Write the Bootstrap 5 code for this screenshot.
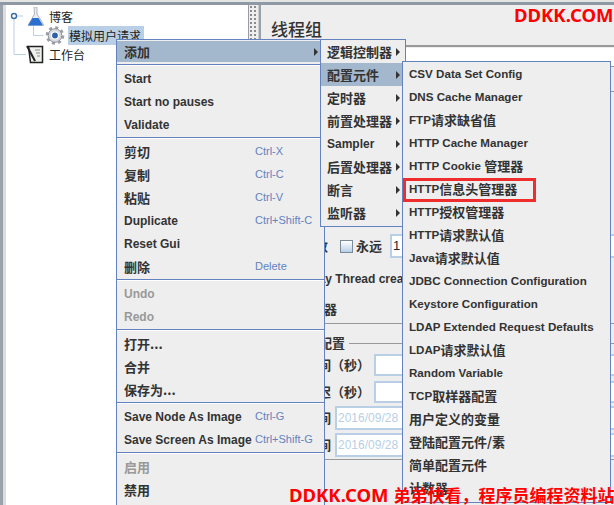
<!DOCTYPE html>
<html lang="zh">
<head>
    <meta charset="UTF-8">
    <title>JMeter menu</title>
    <link href="https://cdn.jsdelivr.net/npm/bootstrap@5.3.0/dist/css/bootstrap.min.css" rel="stylesheet">
    <style>
        html, body { height: 100%; overflow: hidden; }
        body {
            position: relative;
            background: #eeeeee;
            color: #333;
            font-family: "Liberation Sans", "Noto Sans CJK SC", sans-serif;
            font-size: 12px;
            font-weight: 700;
        }
        .zh { font-family: "Noto Sans CJK SC", sans-serif; font-size: 13px; }
        .top-strip { height: 5px; background: linear-gradient(#e4e4e4 0 2px, #8e99a4 2px); }
        .work { height: 500px; }
        .tree-side { width: 249px; padding-left: 6px; background: linear-gradient(90deg, #9aa3ab 0 3px, #ddd 3px); }
        .tree-pane { height: 100%; background: #fff; padding-top: 2px; border-right: 1px solid #99a; font-weight: 400; color: #222; }
        .tree-row { height: 19px; padding-left: 2px; }
        .tree-row svg { flex: none; }
        .tree-text { font-family: "Noto Sans CJK SC", sans-serif; font-size: 12px; margin-left: 2px; }
        .tree-sel { background: #b8cfe5; height: 19px; line-height: 19px; padding: 0 3px 0 1px; margin-left: 1px; }
        .grip {
            width: 10px;
            background: radial-gradient(circle, #888 0.7px, transparent 1px) 0 0 / 4px 4px #eee;
            border-right: 1px solid #ccc;
        }
        .form-pane { flex: 1; min-width: 0; border-left: 2px solid #98a2ac; white-space: nowrap; overflow: hidden; }
        .pane-title { height: 40px; padding: 12px 0 0 10px; font-family: "Noto Sans CJK SC", sans-serif; font-size: 17px; line-height: 24px; font-weight: 500; }
        .rule { height: 2px; background: #999; margin-bottom: 1px; }
        .rule-thin { height: 1px; margin-top: 4px; }
        .rule-end { height: 1px; margin-top: 2px; }
        .name-field { height: 19px; background: #fff; border-bottom: 1px solid #999; }
        .form-gap { height: 25px; border-bottom: 1px solid #999; }
        .form-gap2 { height: 142px; }
        .field-row { height: 24px; }
        .field-low { height: 22px; }
        .gap-a { margin-top: 5px; }
        .gap-b { margin-top: 3px; }
        .delay-row { height: 22px; margin-top: 10px; padding-left: 39px; }
        .sched-row { height: 20px; margin-top: 9px; width: 76px; }
        .legend-row { height: 22px; margin-top: 8px; }
        .w-loop { width: 67px; }
        .w-legend { width: 84px; }
        .w-secs { width: 109px; }
        .w-date { width: 70px; }
        .row-label { text-align: right; flex: none; }
        .tick {
            width: 13px; height: 13px; flex: none; margin: 0 3px 0 12px;
            border: 1px solid #7a8a99;
            background: linear-gradient(#fff, #b8cfe5);
        }
        .box-field { flex: 1; height: 100%; background: #fff; border: 2px solid #b8cfe5; border-right: 0; }
        .box-date { color: #b8cfe5; font-size: 12px; font-weight: 400; line-height: 20px; padding-left: 1px; }
        .box-one { color: #222; font-size: 13px; }
        .legend-line { flex: 1; height: 1px; background: #999; margin-left: 4px; }

        .popup {
            position: absolute;
            background: #eeeeee;
            border: 1px solid #6382bf;
        }
        .popup-a { left: 116px; top: 39px; width: 209px; height: 480px; padding-top: 1px; }
        .popup-b { left: 320px; top: 39px; width: 86px; height: 188px; }
        .popup-c { left: 402px; top: 61px; width: 209px; height: 442px; font-size: 11.6px; }
        .entry { height: 23px; padding-left: 7px; padding-right: 4px; }
        .popup-b .entry { padding-left: 6px; }
        .popup-c .entry { padding-left: 6px; }
        .entry-on { background: #a3b8cc; }
        .entry-top { height: 21px; margin-bottom: 1px; }
        .entry-off { color: #999; }
        .entry-key { color: #6382bf; font-weight: 400; font-size: 11px; position: absolute; left: 138px; }
        .entry-tip {
            margin-left: auto;
            margin-right: 2px;
            width: 0; height: 0;
            border-top: 4px solid transparent;
            border-bottom: 4px solid transparent;
            border-left: 4px solid #333;
        }
        .popup-b .entry-tip { margin-right: 1px; }
        .divider-line { height: 4px; padding-top: 1px; }
        .divider-line::before { content: ""; display: block; height: 1px; background: #6382bf; box-shadow: 0 1px 0 #fff; }
        .pick-box { position: absolute; left: 0; top: 116px; width: 133px; height: 24px; border: 3px solid #ef2d2d; }
        .stamp {
            position: absolute;
            color: #f00;
            font-family: "Noto Sans", "Noto Sans CJK SC", sans-serif;
            font-size: 18.5px;
            font-weight: 700;
            line-height: 21px;
            white-space: nowrap;
        }
        .stamp-top { left: 514px; top: 4px; }
        .stamp-bottom { left: 289px; top: 484px; }
        .stamp-bottom span { font-family: "Noto Sans CJK SC", sans-serif; font-size: 17px; margin-left: 5px; }
    </style>
</head>
<body>
    <div class="top-strip"></div>
    <div class="work d-flex">
        <div class="tree-side">
            <div class="tree-pane">
                <div class="tree-row d-flex align-items-center">
                    <svg width="39" height="19" viewBox="0 0 39 19">
                        <path d="M6 11v8M9 9h6" stroke="#b8cfe5" fill="none"/>
                        <circle cx="6" cy="9" r="2.5" fill="#fff" stroke="#3a6ea5" stroke-width="1.4"/>
                        <path d="M26 0h3v7l6.500 10.500a1 1 0 0 1-1 1.500h-13a1 1 0 0 1-1-1.500l6-10.500z" fill="#e8ebf0" stroke="#b0b6c0"/>
                        <path d="M24.500 11h6l4.500 7.500h-15z" fill="#2a6fd0"/>
                    </svg>
                    <span class="tree-text">博客</span>
                </div>
                <div class="tree-row d-flex align-items-center">
                    <svg width="59" height="19" viewBox="0 0 59 19">
                        <path d="M6 0v19M25.500 0v9.500h10" stroke="#b8cfe5" fill="none"/>
                        <circle cx="47" cy="9.500" r="7.800" fill="none" stroke="#9a9ea6" stroke-width="3" stroke-dasharray="3 3.120"/>
                        <circle cx="47" cy="9.500" r="6.800" fill="#d8dade" stroke="#8e929a"/>
                        <circle cx="47" cy="9.500" r="3.500" fill="#2f5fa8" stroke="#fff" stroke-width="1.200"/>
                    </svg>
                    <span class="tree-text tree-sel">模拟用户请求</span>
                </div>
                <div class="tree-row d-flex align-items-center">
                    <svg width="39" height="19" viewBox="0 0 39 19">
                        <path d="M6 0v9.500h12" stroke="#b8cfe5" fill="none"/>
                        <path d="M20.500 1.500h14v16h-12z" fill="#eef0ea" stroke="#222" stroke-width="1.500"/>
                        <path d="M19 1l8 15" stroke="#222" stroke-width="2"/>
                        <path d="M27 5h5M28 8h4M29 11h3" stroke="#889" fill="none"/>
                    </svg>
                    <span class="tree-text">工作台</span>
                </div>
            </div>
        </div>
        <div class="grip"></div>
        <div class="form-pane">
            <div class="pane-title">线程组</div>
            <div class="rule"></div>
            <div class="name-field"></div>
            <div class="form-gap"></div>
            <div class="form-gap2"></div>
            <div class="field-row d-flex align-items-center">
                <span class="row-label zh w-loop">循环次数</span>
                <span class="tick"></span>
                <span class="zh">永远</span>
                <div class="box-field ms-2 box-date box-one">1</div>
            </div>
            <div class="delay-row d-flex align-items-center">Delay Thread creation until needed</div>
            <div class="sched-row d-flex align-items-center justify-content-end"><span class="zh">调度器</span></div>
            <div class="rule rule-thin"></div>
            <div class="legend-row d-flex align-items-center">
                <span class="row-label zh w-legend">调度器配置</span>
                <span class="legend-line"></span>
            </div>
            <div class="field-low d-flex align-items-center">
                <span class="row-label zh w-secs">持续时间（秒）</span>
                <div class="box-field ms-1"></div>
            </div>
            <div class="field-low gap-a d-flex align-items-center">
                <span class="row-label zh w-secs">启动延迟（秒）</span>
                <div class="box-field ms-1"></div>
            </div>
            <div class="field-row gap-b d-flex align-items-center">
                <span class="row-label zh w-date">启动时间</span>
                <div class="box-field box-date ms-1">2016/09/28</div>
            </div>
            <div class="field-row gap-b d-flex align-items-center">
                <span class="row-label zh w-date">结束时间</span>
                <div class="box-field box-date ms-1">2016/09/28</div>
            </div>
            <div class="rule rule-end"></div>
        </div>
    </div>

    <div class="popup popup-a">
        <div class="entry entry-on entry-top d-flex align-items-center"><span class="zh">添加</span><i class="entry-tip"></i></div>
        <div class="divider-line"></div>
        <div class="entry d-flex align-items-center">Start</div>
        <div class="entry d-flex align-items-center">Start no pauses</div>
        <div class="entry d-flex align-items-center">Validate</div>
        <div class="divider-line"></div>
        <div class="entry d-flex align-items-center"><span class="zh">剪切</span><span class="entry-key">Ctrl-X</span></div>
        <div class="entry d-flex align-items-center"><span class="zh">复制</span><span class="entry-key">Ctrl-C</span></div>
        <div class="entry d-flex align-items-center"><span class="zh">粘贴</span><span class="entry-key">Ctrl-V</span></div>
        <div class="entry d-flex align-items-center">Duplicate<span class="entry-key">Ctrl+Shift-C</span></div>
        <div class="entry d-flex align-items-center">Reset Gui</div>
        <div class="entry d-flex align-items-center"><span class="zh">删除</span><span class="entry-key">Delete</span></div>
        <div class="divider-line"></div>
        <div class="entry entry-off d-flex align-items-center">Undo</div>
        <div class="entry entry-off d-flex align-items-center">Redo</div>
        <div class="divider-line"></div>
        <div class="entry d-flex align-items-center"><span class="zh">打开...</span></div>
        <div class="entry d-flex align-items-center"><span class="zh">合并</span></div>
        <div class="entry d-flex align-items-center"><span class="zh">保存为...</span></div>
        <div class="divider-line"></div>
        <div class="entry d-flex align-items-center">Save Node As Image<span class="entry-key">Ctrl-G</span></div>
        <div class="entry d-flex align-items-center">Save Screen As Image<span class="entry-key">Ctrl+Shift-G</span></div>
        <div class="divider-line"></div>
        <div class="entry entry-off d-flex align-items-center"><span class="zh">启用</span></div>
        <div class="entry d-flex align-items-center"><span class="zh">禁用</span></div>
    </div>

    <div class="popup popup-b">
        <div class="entry d-flex align-items-center"><span class="zh">逻辑控制器</span><i class="entry-tip"></i></div>
        <div class="entry entry-on d-flex align-items-center"><span class="zh">配置元件</span><i class="entry-tip"></i></div>
        <div class="entry d-flex align-items-center"><span class="zh">定时器</span><i class="entry-tip"></i></div>
        <div class="entry d-flex align-items-center"><span class="zh">前置处理器</span><i class="entry-tip"></i></div>
        <div class="entry d-flex align-items-center">Sampler<i class="entry-tip"></i></div>
        <div class="entry d-flex align-items-center"><span class="zh">后置处理器</span><i class="entry-tip"></i></div>
        <div class="entry d-flex align-items-center"><span class="zh">断言</span><i class="entry-tip"></i></div>
        <div class="entry d-flex align-items-center"><span class="zh">监听器</span><i class="entry-tip"></i></div>
    </div>

    <div class="popup popup-c">
        <div class="entry d-flex align-items-center">CSV Data Set Config</div>
        <div class="entry d-flex align-items-center">DNS Cache Manager</div>
        <div class="entry d-flex align-items-center">FTP<span class="zh">请求缺省值</span></div>
        <div class="entry d-flex align-items-center">HTTP Cache Manager</div>
        <div class="entry d-flex align-items-center">HTTP Cookie&nbsp;<span class="zh">管理器</span></div>
        <div class="entry d-flex align-items-center">HTTP<span class="zh">信息头管理器</span></div>
        <div class="entry d-flex align-items-center">HTTP<span class="zh">授权管理器</span></div>
        <div class="entry d-flex align-items-center">HTTP<span class="zh">请求默认值</span></div>
        <div class="entry d-flex align-items-center">Java<span class="zh">请求默认值</span></div>
        <div class="entry d-flex align-items-center">JDBC Connection Configuration</div>
        <div class="entry d-flex align-items-center">Keystore Configuration</div>
        <div class="entry d-flex align-items-center">LDAP Extended Request Defaults</div>
        <div class="entry d-flex align-items-center">LDAP<span class="zh">请求默认值</span></div>
        <div class="entry d-flex align-items-center">Random Variable</div>
        <div class="entry d-flex align-items-center">TCP<span class="zh">取样器配置</span></div>
        <div class="entry d-flex align-items-center"><span class="zh">用户定义的变量</span></div>
        <div class="entry d-flex align-items-center"><span class="zh">登陆配置元件/素</span></div>
        <div class="entry d-flex align-items-center"><span class="zh">简单配置元件</span></div>
        <div class="entry d-flex align-items-center"><span class="zh">计数器</span></div>
        <div class="pick-box"></div>
    </div>

    <div class="stamp stamp-top">DDKK.COM</div>
    <div class="stamp stamp-bottom">DDKK.COM<span>弟弟快看，程序员编程资料站</span></div>

    <script src="https://cdn.jsdelivr.net/npm/bootstrap@5.3.0/dist/js/bootstrap.bundle.min.js"></script>
</body>
</html>
